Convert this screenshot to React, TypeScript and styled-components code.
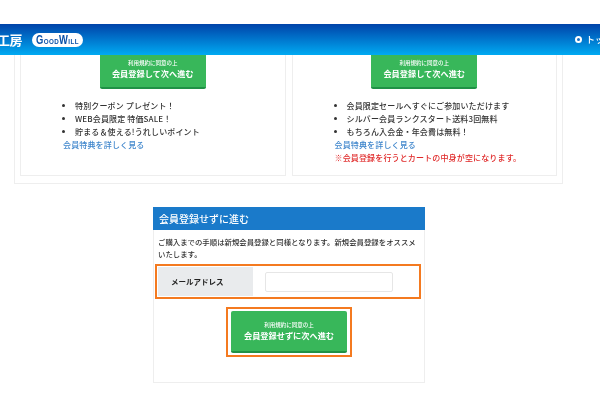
import styled, { createGlobalStyle } from 'styled-components';

const GlobalStyle = createGlobalStyle`
  html, body {
    margin: 0;
    padding: 0;
    background: #fff;
  }
  body {
    font-family: "Noto Sans CJK JP", "Liberation Sans", sans-serif;
    color: #333;
  }
`;

const plans = [
  {
    items: ['特別クーポン プレゼント！', 'WEB会員限定 特価SALE！', '貯まる＆使える!うれしいポイント'],
    indent: 42,
    note: '',
  },
  {
    items: ['会員限定セールへすぐにご参加いただけます', 'シルバー会員ランクスタート送料3回無料', 'もちろん入会金・年会費は無料！'],
    indent: 42,
    note: '※会員登録を行うとカートの中身が空になります。',
  },
];

export default function App() {
  return (
    <Page>
      <GlobalStyle />
      <Header>
        <Brand>
          <BrandName>工房</BrandName>
          <Logo>
            <LogoText>GoodWill</LogoText>
          </Logo>
        </Brand>
        <TopLink>
          <TopDot />
          <TopLabel>トップ</TopLabel>
        </TopLink>
      </Header>

      <PlanBox>
        {plans.map((plan) => (
          <PlanCard key={plan.items[0]}>
            <GreenButton $flatTop>
              <ButtonSmall>利用規約に同意の上</ButtonSmall>
              <ButtonMain>会員登録して次へ進む</ButtonMain>
            </GreenButton>
            <PlanBody $indent={plan.indent}>
              <Perks>
                {plan.items.map((item) => (
                  <li key={item}>{item}</li>
                ))}
              </Perks>
              <DetailLink>会員特典を詳しく見る</DetailLink>
              {plan.note && <Note>{plan.note}</Note>}
            </PlanBody>
          </PlanCard>
        ))}
      </PlanBox>

      <GuestCard>
        <GuestTitle>会員登録せずに進む</GuestTitle>
        <GuestText>ご購入までの手順は新規会員登録と同様となります。新規会員登録をオススメいたします。</GuestText>
        <EmailRow>
          <EmailLabel>メールアドレス</EmailLabel>
          <EmailCell>
            <EmailInput />
          </EmailCell>
        </EmailRow>
        <ButtonFrame>
          <GreenButton>
            <ButtonSmall>利用規約に同意の上</ButtonSmall>
            <ButtonMain>会員登録せずに次へ進む</ButtonMain>
          </GreenButton>
        </ButtonFrame>
      </GuestCard>
    </Page>
  );
}

const Page = styled.div`
  width: 600px;
  height: 400px;
  padding-top: 24px;
  box-sizing: border-box;
  overflow: hidden;
  filter: blur(0.35px);
`;

const Header = styled.header`
  display: flex;
  justify-content: space-between;
  align-items: center;
  height: 31px;
  background: linear-gradient(#0043a9, #00aaf2);
`;

const Brand = styled.div`
  display: flex;
  align-items: center;
  gap: 10px;
  margin-left: -3px;
`;

const BrandName = styled.span`
  color: #fff;
  font-size: 13px;
  font-weight: 700;
  letter-spacing: -0.5px;
`;

const Logo = styled.div`
  display: flex;
  justify-content: center;
  align-items: center;
  width: 51px;
  height: 14px;
  border-radius: 7px;
  background: #fff;
`;

const LogoText = styled.span`
  color: #0a50a8;
  font-family: "Liberation Sans", sans-serif;
  font-size: 12px;
  font-weight: 700;
  font-variant: small-caps;
  letter-spacing: 0.5px;
  transform: scaleX(0.78);
`;

const TopLink = styled.div`
  display: flex;
  align-items: center;
  gap: 4px;
  margin-right: -13px;
  color: #fff;
`;

const TopDot = styled.span`
  width: 3px;
  height: 3px;
  border: 2px solid #fff;
  border-radius: 50%;
  background: #1a6fc4;
`;

const TopLabel = styled.span`
  font-size: 9px;
  font-weight: 500;
`;

const PlanBox = styled.section`
  display: flex;
  gap: 6px;
  width: 549px;
  height: 129px;
  margin-left: 14px;
  padding: 0 5px 7px;
  box-sizing: border-box;
  border: 1px solid #eeeeee;
  border-top: 0;
`;

const PlanCard = styled.article`
  display: flex;
  flex-direction: column;
  flex: 1;
  border: 1px solid #eeeeee;
  border-top: 0;
`;

const GreenButton = styled.div<{ $flatTop?: boolean }>`
  display: flex;
  flex-direction: column;
  justify-content: center;
  align-items: center;
  align-self: center;
  width: ${(p) => (p.$flatTop ? '106px' : '116px')};
  height: ${(p) => (p.$flatTop ? '34px' : '42px')};
  padding-bottom: ${(p) => (p.$flatTop ? '3px' : '0')};
  box-sizing: border-box;
  border-bottom: 2px solid #1f9146;
  border-radius: ${(p) => (p.$flatTop ? '0 0 2px 2px' : '2px')};
  background: #38b75a;
  color: #fff;
`;

const ButtonSmall = styled.span`
  font-size: 5.5px;
  line-height: 8px;
  font-weight: 500;
`;

const ButtonMain = styled.span`
  font-size: 8.2px;
  line-height: 13px;
  font-weight: 700;
`;

const PlanBody = styled.div<{ $indent: number }>`
  margin-top: 10px;
  padding-left: ${(p) => p.$indent}px;
  font-size: 8px;
  line-height: 13px;
  font-weight: 500;
  letter-spacing: 0.15px;
`;

const Perks = styled.ul`
  margin: 0;
  padding: 0 0 0 12px;
`;

const DetailLink = styled.div`
  color: #3f86cc;
`;

const Note = styled.div`
  color: #e02a2a;
`;

const GuestCard = styled.section`
  display: flex;
  flex-direction: column;
  width: 272px;
  height: 176px;
  margin: 23px 0 0 153px;
  box-sizing: border-box;
  border: 1px solid #eeeeee;
  border-top: 0;
`;

const GuestTitle = styled.h2`
  height: 23px;
  margin: 0 -1px;
  padding-left: 6px;
  background: #1a7aca;
  color: #fff;
  font-size: 10px;
  font-weight: 500;
  line-height: 23px;
`;

const GuestText = styled.p`
  margin: 6px 0 0;
  padding: 0 4px;
  font-size: 7.4px;
  line-height: 12px;
  font-weight: 500;
`;

const EmailRow = styled.div`
  display: flex;
  width: 266px;
  height: 35px;
  margin: 4px 0 0 1px;
  box-sizing: border-box;
  border: 2px solid #f47a20;
  padding: 1px;
`;

const EmailLabel = styled.div`
  display: flex;
  align-items: center;
  width: 95px;
  padding-left: 13px;
  box-sizing: border-box;
  background: #e9ebed;
  color: #222;
  font-size: 7.5px;
  font-weight: 700;
`;

const EmailCell = styled.div`
  display: flex;
  align-items: center;
  flex: 1;
  padding-left: 12px;
`;

const EmailInput = styled.div`
  width: 128px;
  height: 20px;
  box-sizing: border-box;
  border: 1px solid #e6e6e6;
  border-radius: 2px;
  background: #fff;
`;

const ButtonFrame = styled.div`
  display: flex;
  justify-content: center;
  align-items: center;
  align-self: center;
  width: 126px;
  height: 50px;
  margin: 8px 0 0;
  box-sizing: border-box;
  border: 2px solid #f47a20;
`;
